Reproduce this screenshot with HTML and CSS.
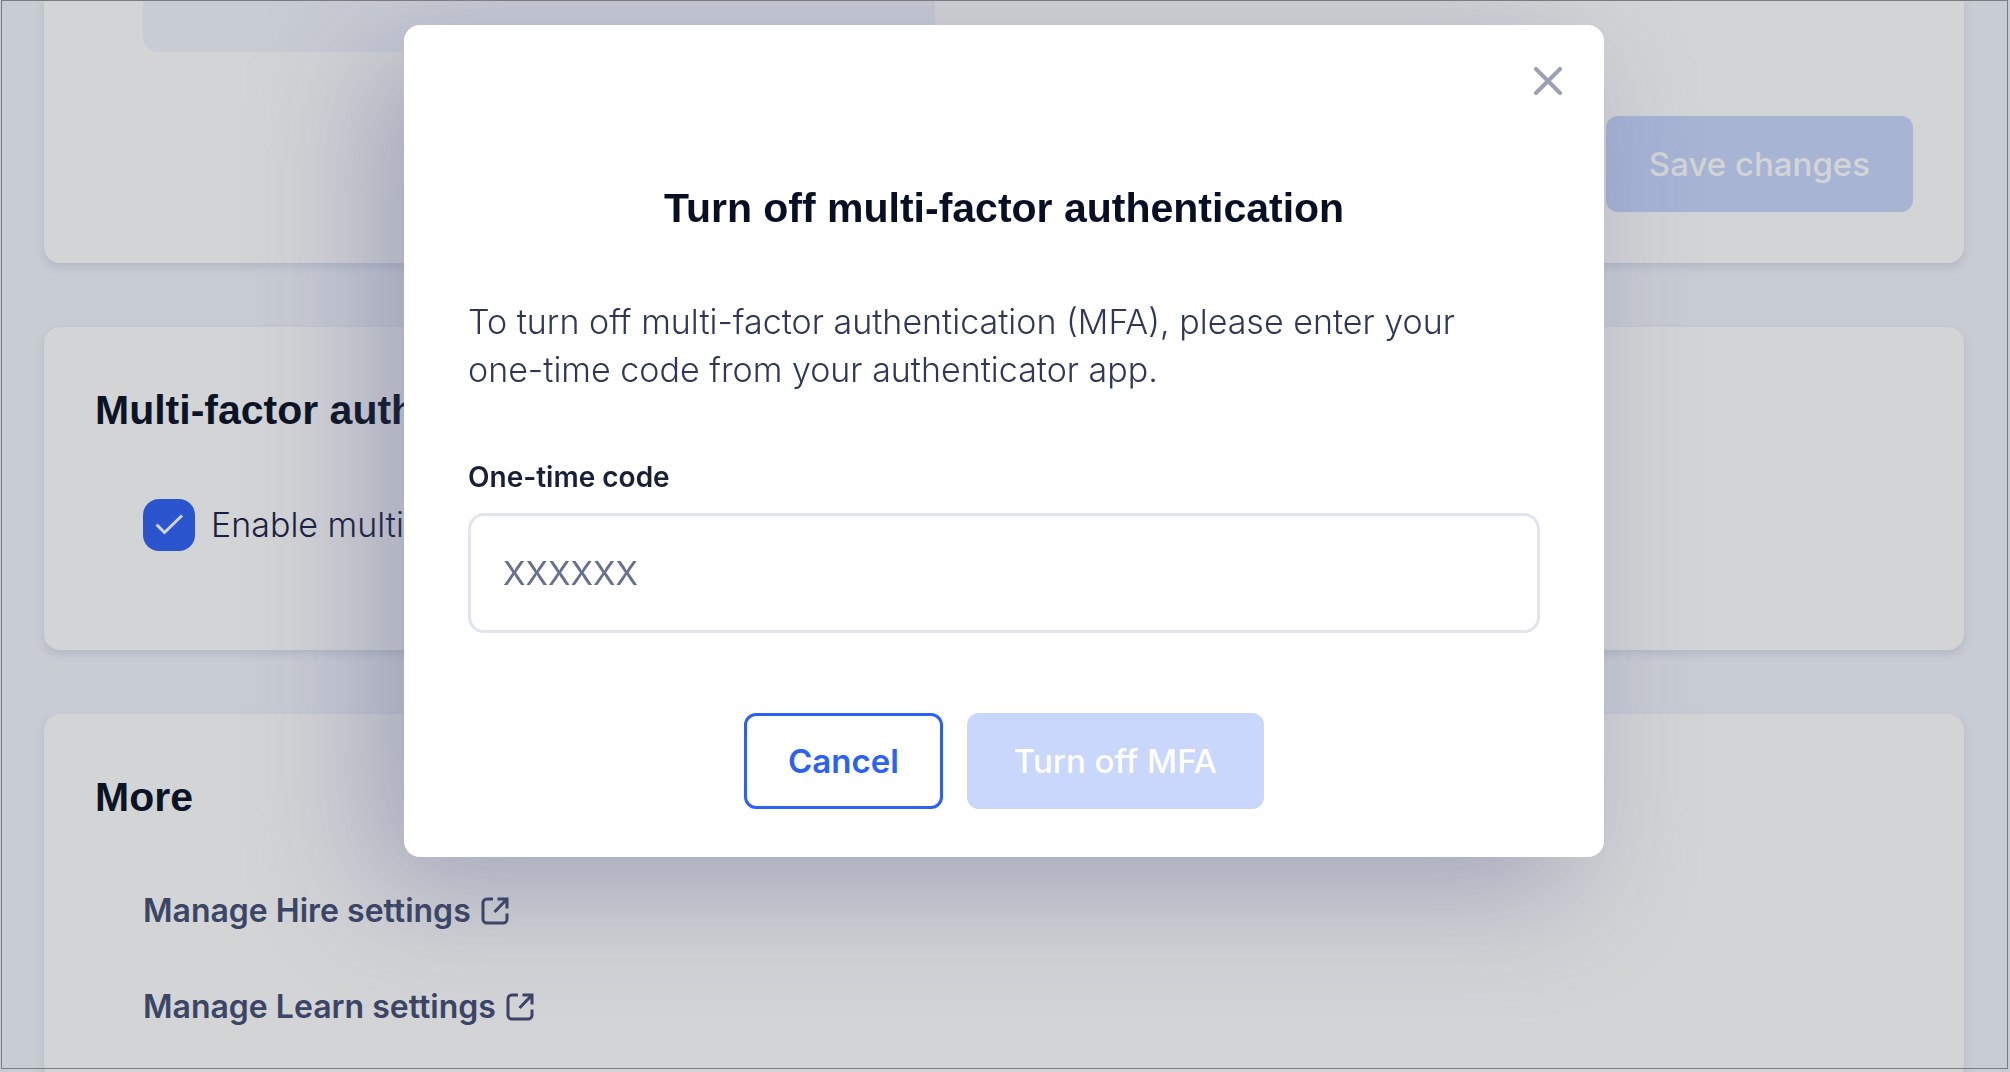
FILE: index.html
```html
<!DOCTYPE html>
<html lang="en">
<head>
<meta charset="utf-8">
<meta name="viewport" content="width=device-width, initial-scale=1">
<title>Account settings</title>
<link rel="stylesheet" href="styles.css">
</head>
<body>
<main class="page">
  <section class="card card-profile">
    <div class="panel"></div>
    <button class="button button-disabled" type="button" disabled>Save changes</button>
  </section>

  <section class="card card-mfa">
    <h2 class="heading">Multi-factor authentication</h2>
    <div class="option">
      <input class="checkbox" type="checkbox" id="mfa" checked>
      <label class="option-label" for="mfa">Enable multi-factor authentication</label>
    </div>
  </section>

  <section class="card card-more">
    <h2 class="heading">More</h2>
    <nav class="links">
      <a class="link" href="#hire">Manage Hire settings
        <svg class="link-icon" viewBox="0 0 28 28" aria-hidden="true"><path d="M12 2H6a4 4 0 0 0-4 4v16a4 4 0 0 0 4 4h16a4 4 0 0 0 4-4v-5.500M16.500 2H26v9.500M26 2L13.500 15"/></svg>
      </a>
      <a class="link" href="#learn">Manage Learn settings
        <svg class="link-icon" viewBox="0 0 28 28" aria-hidden="true"><path d="M12 2H6a4 4 0 0 0-4 4v16a4 4 0 0 0 4 4h16a4 4 0 0 0 4-4v-5.500M16.500 2H26v9.500M26 2L13.500 15"/></svg>
      </a>
    </nav>
  </section>
</main>

<div class="backdrop">
  <div class="modal" role="dialog" aria-modal="true" aria-labelledby="modal-title">
    <button class="close" type="button" aria-label="Close">
      <svg class="close-icon" viewBox="0 0 28 28" aria-hidden="true"><path d="M2 2L26 26M26 2L2 26"/></svg>
    </button>
    <h1 class="heading modal-title" id="modal-title">Turn off multi-factor authentication</h1>
    <p class="modal-text">To turn off multi-factor authentication (MFA), please enter your <span class="keep">one-time</span> code from your authenticator app.</p>
    <form class="form">
      <label class="field-label" for="code">One-time code</label>
      <input class="field" id="code" type="text" placeholder="XXXXXX" autocomplete="one-time-code">
      <div class="actions">
        <button class="button button-outline" type="button">Cancel</button>
        <button class="button button-disabled button-wide" type="submit" disabled>Turn off MFA</button>
      </div>
    </form>
  </div>
</div>
<div class="frame"></div>
</body>
</html>
```
FILE: styles.css
```css
* {
  box-sizing: border-box;
}

body {
  margin: 0;
  overflow: hidden;
  background: #f2f5fc;
  font-family: Inter, "Liberation Sans", sans-serif;
  font-size: 34px;
  line-height: 48px;
}

.page {
  display: flex;
  flex-direction: column;
  gap: 64px;
  padding: 0 46px 0 44px;
}

.card {
  display: flex;
  flex-direction: column;
  padding: 59px 51px 99px;
  border-radius: 16px;
  background: #fff;
  box-shadow: 0 4px 8px rgba(67, 76, 129, 0.14);
}

.card-profile {
  gap: 64px;
  align-items: flex-end;
  padding-top: 0;
  padding-bottom: 51px;
  border-radius: 0 0 16px 16px;
}

.card-more {
  padding-bottom: 51px;
}

.panel {
  align-self: flex-start;
  width: 100%;
  max-width: 792px;
  height: 52px;
  margin-left: 48px;
  border-radius: 0 0 0 16px;
  background: #f2f5fc;
}

.heading {
  margin: 0;
  color: #060f23;
  font-family: "Liberation Sans", Arial, sans-serif;
  font-size: 41px;
  font-weight: 700;
  line-height: 48px;
}

.option {
  display: flex;
  align-items: center;
  gap: 16px;
  margin-top: 65px;
  padding-left: 48px;
}

.checkbox {
  width: 52px;
  height: 52px;
  margin: 0;
  appearance: none;
  border-radius: 16px;
  background: #2c61f7 url("data:image/svg+xml,%3Csvg xmlns='http://www.w3.org/2000/svg' viewBox='0 0 52 52'%3E%3Cpath d='M13.500 25.500l8 8L39 16.500' fill='none' stroke='%23fff' stroke-width='3'/%3E%3C/svg%3E") center / 52px 52px no-repeat;
}

.option-label {
  color: #182044;
  font-weight: 300;
}

.links {
  display: flex;
  flex-direction: column;
  align-items: flex-start;
  gap: 48px;
  margin-top: 66px;
  padding-left: 48px;
}

.link {
  display: flex;
  align-items: center;
  gap: 10px;
  color: #424d72;
  font-size: 32px;
  font-weight: 600;
  text-decoration: none;
}

.link-icon {
  width: 28px;
  height: 28px;
  fill: none;
  stroke: currentColor;
  stroke-width: 3;
}

.button {
  height: 96px;
  padding: 0 43px;
  border: 0;
  border-radius: 12px;
  font-family: inherit;
  font-size: 33px;
  line-height: 48px;
}

.button-disabled {
  background: #c9d7fd;
  color: #fff;
  font-weight: 500;
}

.button-outline {
  padding: 0 41px;
  border: 3px solid #2c61f7;
  background: #fff;
  color: #2c61f7;
  font-weight: 600;
}

.button-wide {
  padding: 0 47px;
}

.backdrop {
  position: fixed;
  inset: 0;
  display: flex;
  align-items: flex-start;
  justify-content: center;
  padding: 25px 2px 0 0;
  background: rgba(35, 40, 50, 0.2);
}

.modal {
  position: relative;
  width: 100%;
  max-width: 1200px;
  padding: 159px 64px 48px;
  border-radius: 16px;
  background: #fff;
  box-shadow: -32px 32px 120px rgba(68, 76, 129, 0.35);
}

.close {
  position: absolute;
  top: 42px;
  right: 42px;
  display: flex;
  padding: 0;
  border: 0;
  background: none;
}

.close-icon {
  width: 28px;
  height: 28px;
  stroke: #9aa0b5;
  stroke-width: 4;
  stroke-linecap: round;
}

.modal-title {
  text-align: center;
}

.modal-text {
  margin: 66px 0 63px;
  color: #2e3856;
  font-weight: 300;
}

.keep {
  white-space: nowrap;
}

.form {
  display: flex;
  flex-direction: column;
}

.field-label {
  color: #182038;
  font-size: 28px;
  font-weight: 600;
  line-height: 40px;
}

.field {
  height: 120px;
  margin-top: 16px;
  padding: 0 32px;
  border: 3px solid #e1e4ee;
  border-radius: 16px;
  background: #fff;
  color: #182038;
  font-family: inherit;
  font-size: 33px;
}

.field::placeholder {
  color: #66708f;
  opacity: 1;
}

.actions {
  display: flex;
  justify-content: center;
  gap: 24px;
  margin-top: 80px;
}

.frame {
  position: fixed;
  inset: 0 2px 3px 1px;
  border: 1px solid #7b7c80;
  pointer-events: none;
}
```
